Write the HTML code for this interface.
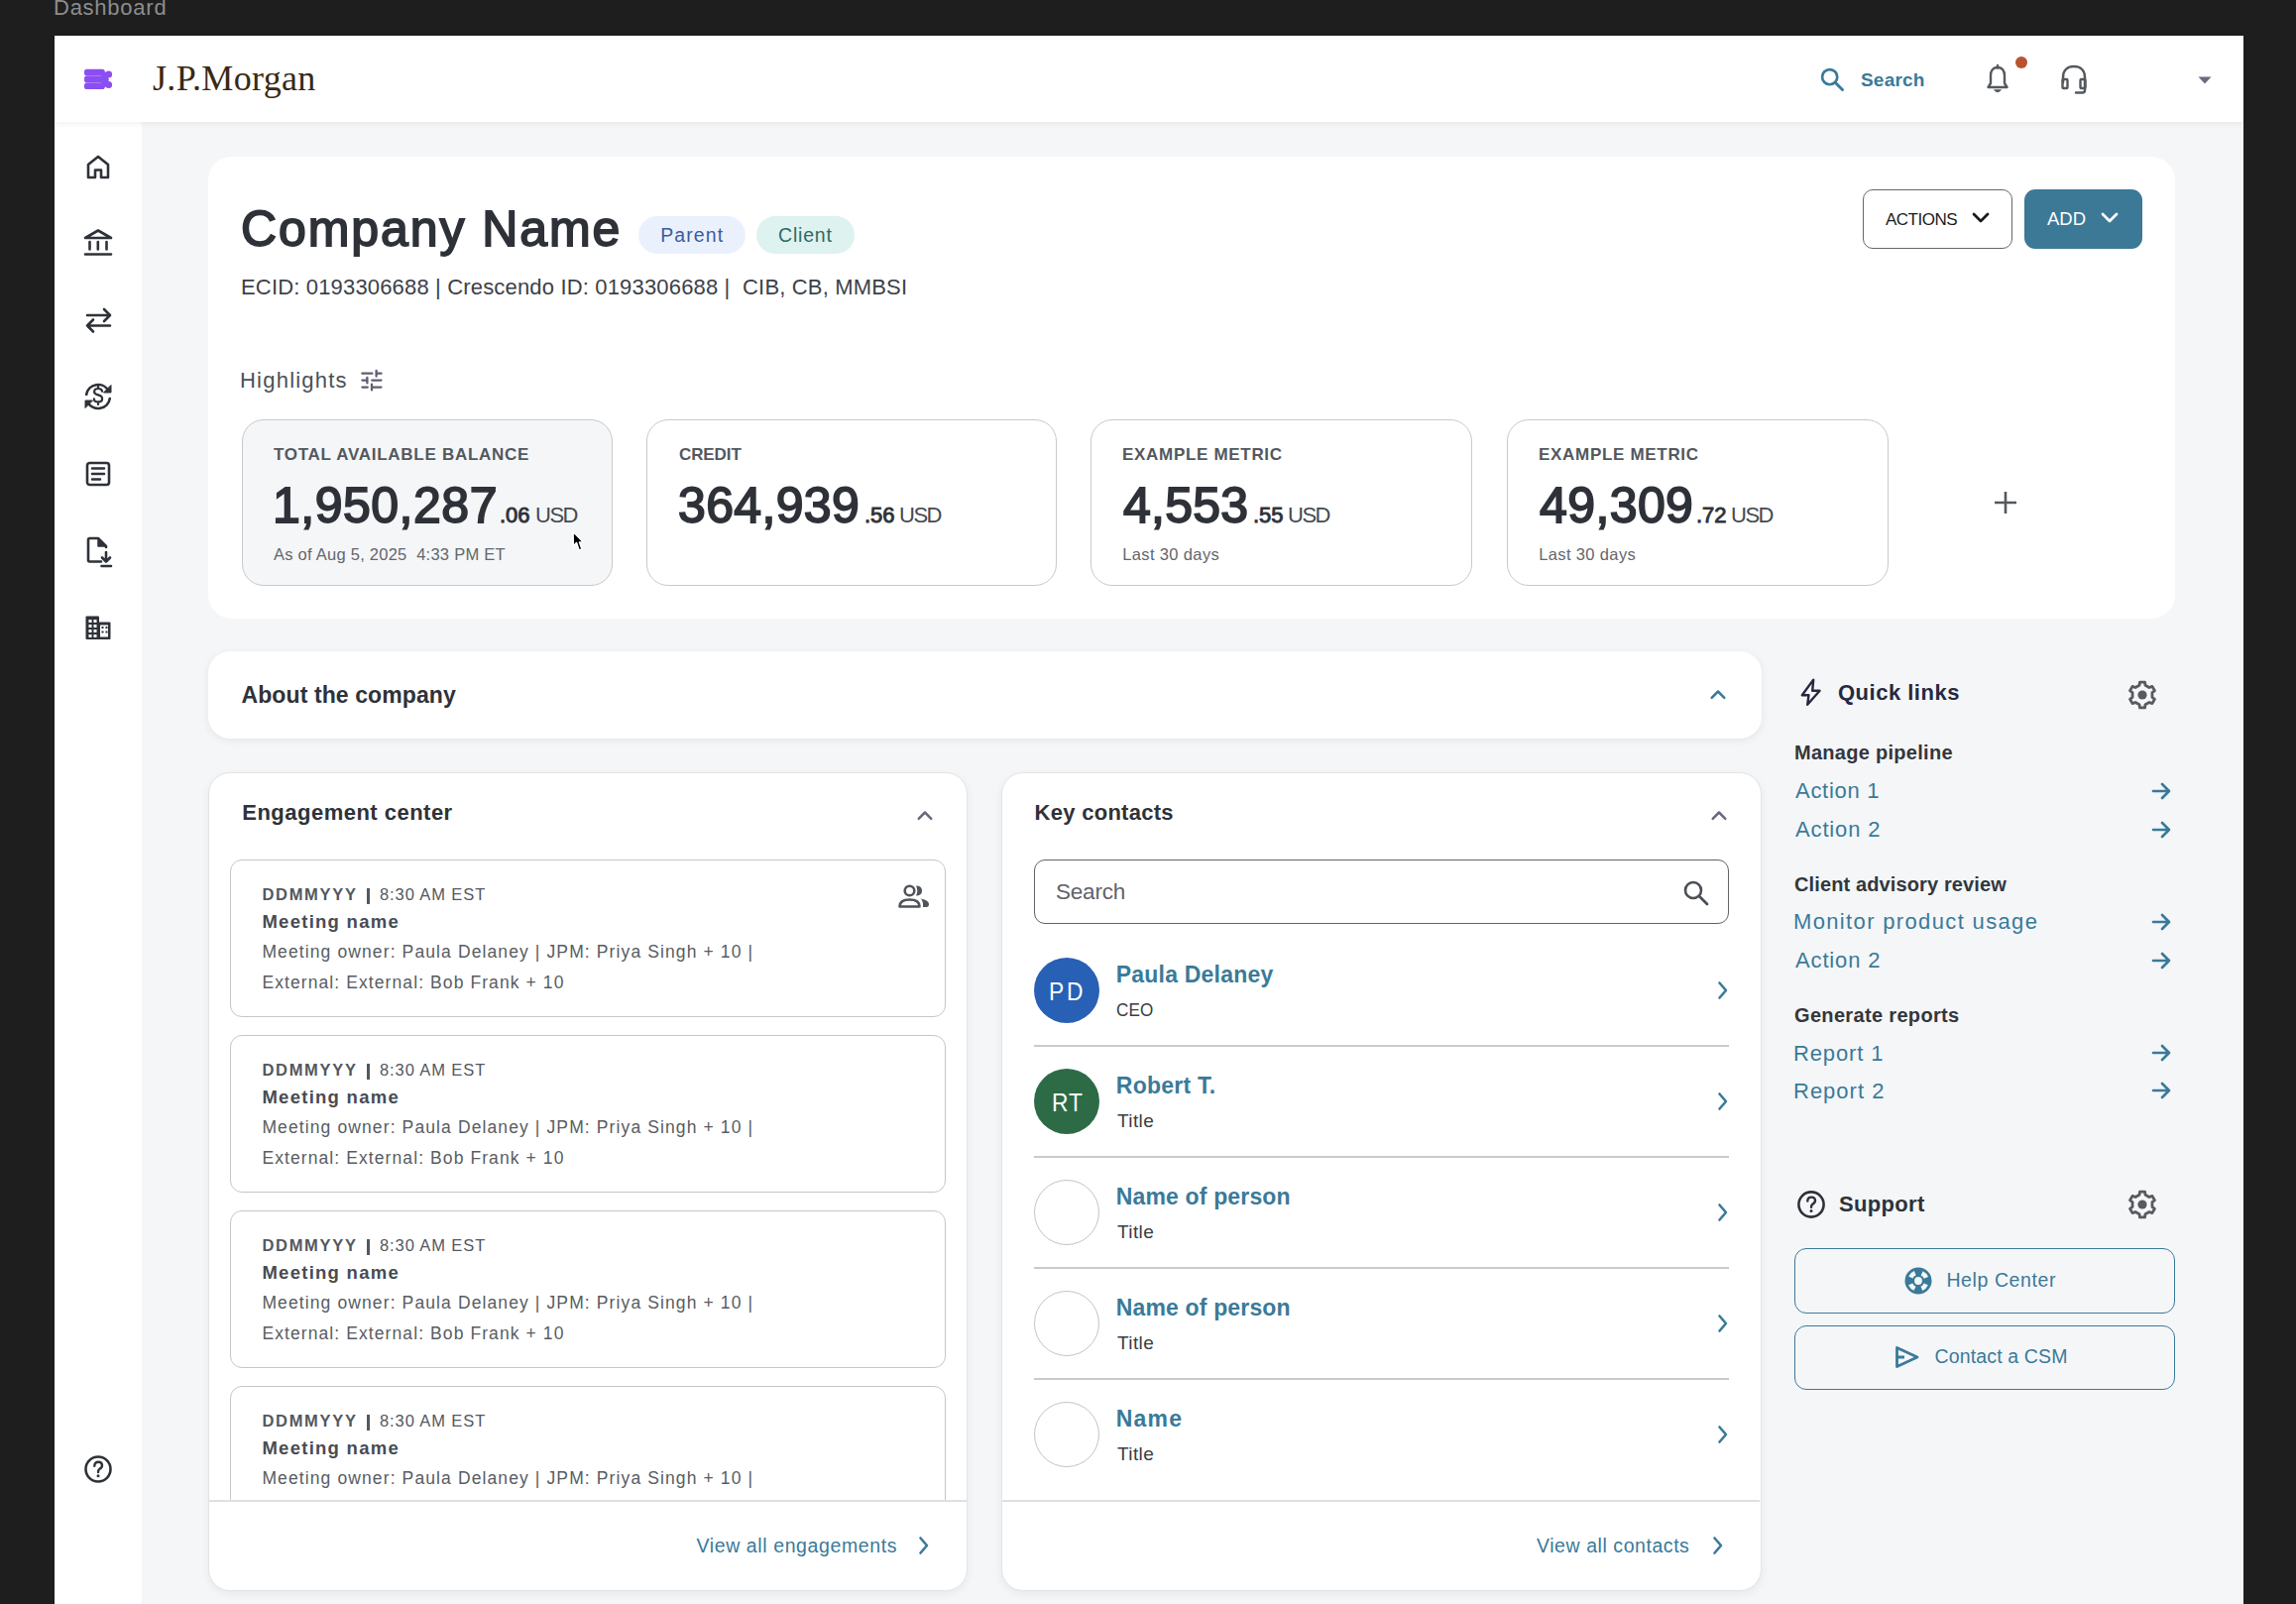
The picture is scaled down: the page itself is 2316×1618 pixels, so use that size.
<!DOCTYPE html><html><head><meta charset="utf-8"><style>
*{margin:0;padding:0;box-sizing:border-box}
html,body{width:2316px;height:1618px;overflow:hidden}
body{background:#1e1e1e;font-family:"Liberation Sans",sans-serif;position:relative}
.a{position:absolute}
.t{position:absolute;white-space:nowrap;line-height:1}
svg.a{overflow:visible}
</style></head><body>
<div class="t" id="tcf64cbfd" style="left:54.00px;top:-2.62px;font-size:22px;font-weight:400;color:#8d8d8d;letter-spacing:0.750px;">Dashboard</div>
<div class="a" style="left:55px;top:36px;width:2208px;height:1582px;background:#f5f6f8;"></div>
<div class="a" style="left:55px;top:36px;width:2208px;height:87px;background:#fff;box-shadow:0 2px 6px rgba(0,0,0,0.06);z-index:2;"></div>
<div class="a" style="left:55px;top:123px;width:88px;height:1495px;background:#fff;"></div>
<svg class="a" style="left:80px;top:64px;z-index:3;" width="40" height="32" viewBox="0 0 40 32" fill="none"><g fill="#8b4ef3"><rect x="5" y="5.8" width="20.8" height="6.6" rx="2.6"/><rect x="5" y="12.6" width="20" height="6.8" rx="2.6"/><rect x="5" y="19.6" width="20.8" height="6.4" rx="2.6"/><circle cx="29.6" cy="10.9" r="3.5"/><circle cx="29.6" cy="21.5" r="3.5"/><path d="M22 8 L28 9 L29.8 16.4 L28 23.5 L22 24 Z"/><rect x="22" y="11" width="5" height="10"/></g></svg>
<div class="t" id="t0781827a" style="left:154.00px;top:61.03px;font-size:36px;font-weight:400;color:#3a2914;letter-spacing:0.333px;font-family:'Liberation Serif',serif;z-index:3;">J.P.Morgan</div>
<svg class="a" style="left:1834px;top:66px;z-index:3;" width="28" height="28" viewBox="0 0 24 24" fill="none"><circle cx="10" cy="10" r="6.5" stroke="#3a7a99" stroke-width="2.3"/><path d="M15 15 L21 21" stroke="#3a7a99" stroke-width="2.5" stroke-linecap="round"/></svg>
<div class="t" id="t28336fed" style="left:1877.00px;top:70.72px;font-size:19px;font-weight:700;color:#3a7a99;letter-spacing:0.200px;z-index:3;">Search</div>
<svg class="a" style="left:2002px;top:64px;z-index:3;" width="26" height="32" viewBox="0 0 26 32" fill="none"><path d="M13 4 C8 4 6 8 6 12 V20 L3.5 24 H22.5 L20 20 V12 C20 8 18 4 13 4 Z" stroke="#55595e" stroke-width="2.4" stroke-linejoin="round"/><path d="M13 2 V4.5" stroke="#55595e" stroke-width="2.4" stroke-linecap="round"/><path d="M10.5 27 Q13 30 15.5 27 Z" fill="#55595e" stroke="#55595e" stroke-width="1.5"/></svg>
<div class="a" style="left:2033px;top:57px;width:12px;height:12px;border-radius:50%;background:#b9532f;z-index:3;"></div>
<svg class="a" style="left:2077px;top:64px;z-index:3;" width="30" height="32" viewBox="0 0 30 32" fill="none"><path d="M4 19 V14 C4 7 8.5 3 15 3 C21.5 3 26 7 26 14 V27 Q26 29.5 23.5 29.5 H17" stroke="#55595e" stroke-width="2.5" stroke-linecap="round"/><rect x="3.5" y="16" width="5" height="9" rx="1" stroke="#55595e" stroke-width="2.4"/><rect x="21.5" y="16" width="5" height="9" rx="1" stroke="#55595e" stroke-width="2.4"/></svg>
<svg class="a" style="left:2216px;top:76px;z-index:3;" width="16" height="10" viewBox="0 0 16 10" fill="none"><path d="M1.5 1.5 H14.5 L8 8.5 Z" fill="#6c6b7c"/></svg>
<svg class="a" style="left:86px;top:155px;" width="26" height="27" viewBox="0 0 26 27" fill="none"><path d="M3 11 L13 3 L23 11 V24 H16 V16.5 H10 V24 H3 Z" stroke="#2e3238" stroke-width="2.6" stroke-linejoin="round"/></svg>
<svg class="a" style="left:83px;top:229px;" width="32" height="30" viewBox="0 0 32 30" fill="none"><path d="M3 11 L16 3.5 L29 11 Z" stroke="#2e3238" stroke-width="2.6" stroke-linejoin="round"/><path d="M7.5 15 V22.5 M15.8 15 V22.5 M24.5 15 V22.5 M3 27.5 H29" stroke="#2e3238" stroke-width="2.6" stroke-linecap="round"/></svg>
<svg class="a" style="left:84px;top:163px;" width="30" height="20" viewBox="0 0 30 20" fill="none"></svg>
<svg class="a" style="left:84px;top:304px;" width="30" height="38" viewBox="0 0 30 38" fill="none"><path d="M4 14 H27 M21 8 L27 14 L21 20 M27 24.5 H4 M10 18.5 L4 24.5 L10 30.5" stroke="#2e3238" stroke-width="2.6" stroke-linecap="round" stroke-linejoin="round"/></svg>
<svg class="a" style="left:82px;top:383px;" width="34" height="34" viewBox="0 0 34 34" fill="none"><path d="M5.18 14.92 A12 12 0 0 1 27.39 11" stroke="#2e3238" stroke-width="2.6" stroke-linecap="round"/><path d="M28.82 19.08 A12 12 0 0 1 6.61 23" stroke="#2e3238" stroke-width="2.6" stroke-linecap="round"/><path d="M30 5.5 V13 H22.5 Z" fill="#2e3238" stroke="#2e3238" stroke-width="1" stroke-linejoin="round"/><path d="M4 28.5 V21 H11.5 Z" fill="#2e3238" stroke="#2e3238" stroke-width="1" stroke-linejoin="round"/><path d="M21 11.8 C21 9.8 19.3 9 17 9 C14.6 9 13.1 10.2 13.1 12.2 C13.1 14.3 15 14.9 17 15.4 C19.2 15.9 21.1 16.7 21.1 19.2 C21.1 21.3 19.4 22.4 17 22.4 C14.6 22.4 12.9 21.4 12.9 19.4 M17 6.5 V9 M17 22.4 V25" stroke="#2e3238" stroke-width="2.2" stroke-linecap="round"/></svg>
<svg class="a" style="left:85px;top:464px;" width="28" height="28" viewBox="0 0 28 28" fill="none"><rect x="3" y="3" width="22" height="22" rx="2.5" stroke="#2e3238" stroke-width="2.6"/><path d="M8 8.5 H20 M8 14 H20 M8 19.5 H16" stroke="#2e3238" stroke-width="2.6" stroke-linecap="round"/></svg>
<svg class="a" style="left:85px;top:539px;" width="30" height="35" viewBox="0 0 30 35" fill="none"><path d="M17 27.5 H5.5 Q4 27.5 4 26 V5.5 Q4 4 5.5 4 H14 L22 12 V13" stroke="#2e3238" stroke-width="2.6" stroke-linecap="round" stroke-linejoin="round"/><path d="M14 4 V12 H22 Z" fill="#2e3238" stroke="#2e3238" stroke-width="1.5" stroke-linejoin="round"/><path d="M22 18 V27 M18 23.5 L22 27.5 L26 23.5 M17.5 32 H27" stroke="#2e3238" stroke-width="2.6" stroke-linecap="round" stroke-linejoin="round"/></svg>
<svg class="a" style="left:84px;top:619px;" width="30" height="28" viewBox="0 0 30 28" fill="none"><path d="M2.5 25 V3.5 Q2.5 2.5 3.5 2.5 H15 Q16 2.5 16 3.5 V8.5 H26.5 Q27.5 8.5 27.5 9.5 V25 Q27.5 26 26.5 26 H3.5 Q2.5 26 2.5 25 Z" fill="#2e3238"/><g fill="#fff"><rect x="5.5" y="6" width="3" height="3"/><rect x="10.5" y="6" width="3" height="3"/><rect x="5.5" y="11" width="3" height="3"/><rect x="10.5" y="11" width="3" height="3"/><rect x="5.5" y="16" width="3" height="3"/><rect x="10.5" y="16" width="3" height="3"/><rect x="5.5" y="21" width="3" height="3"/><rect x="10.5" y="21" width="3" height="3"/><rect x="17" y="11.5" width="8" height="12"/></g><g fill="#2e3238"><rect x="18.5" y="13" width="2" height="2"/><rect x="22.5" y="13" width="2" height="2"/><rect x="18.5" y="17.5" width="2" height="2"/><rect x="22.5" y="17.5" width="2" height="2"/></g></svg>
<svg class="a" style="left:83px;top:1466px;" width="32" height="32" viewBox="0 0 32 32" fill="none"><circle cx="16" cy="16" r="12.5" stroke="#2e3238" stroke-width="2.6"/><path d="M12.3 12.8 Q12.3 8.8 16.2 8.8 Q20 8.8 20 12.3 Q20 14.5 17.5 15.8 Q16 16.7 16 19" stroke="#2e3238" stroke-width="2.4" stroke-linecap="round"/><circle cx="16" cy="22.8" r="1.5" fill="#2e3238"/></svg>
<div class="a" style="left:210px;top:158px;width:1984px;height:466px;background:#fff;border-radius:24px;"></div>
<div class="t" id="td104c888" style="left:243.00px;top:206.27px;font-size:50px;font-weight:400;color:#2e3238;letter-spacing:1.909px;-webkit-text-stroke:1.8px #2e3238;">Company Name</div>
<div class="a" style="left:644px;top:218px;width:108px;height:38px;background:#eaf1fc;border-radius:19px;"></div>
<div class="t" id="td9acc317" style="left:666.20px;top:227.69px;font-size:19.5px;font-weight:400;color:#3b5c9c;letter-spacing:1.100px;">Parent</div>
<div class="a" style="left:763px;top:218px;width:99px;height:38px;background:#def2f0;border-radius:19px;"></div>
<div class="t" id="t40ffaa43" style="left:785.00px;top:227.69px;font-size:19.5px;font-weight:400;color:#2c6a66;letter-spacing:0.800px;">Client</div>
<div class="t" id="t8c62459a" style="left:243.00px;top:279.38px;font-size:22px;font-weight:400;color:#3c4148;letter-spacing:0.167px;">ECID: 0193306688 | Crescendo ID: 0193306688 |&nbsp; CIB, CB, MMBSI</div>
<div class="t" id="tb2045c07" style="left:242.00px;top:373.48px;font-size:22px;font-weight:400;color:#4b5057;letter-spacing:1.222px;">Highlights</div>
<svg class="a" style="left:360px;top:368px;" width="32" height="32" viewBox="0 0 32 32" fill="none"><path d="M5.4 8.7 H15.4 M19.6 5.8 V11.6 M19.6 8.7 H24.5 M5.4 15.6 H10.4 M10.4 12.8 V18.4 M15.2 15.6 H24.5 M5.4 22.6 H10.8 M15 19.6 V25.4 M15 22.6 H24.5" stroke="#5f5e72" stroke-width="2.3" stroke-linecap="round"/></svg>
<div class="a" style="left:244px;top:423px;width:374px;height:168px;background:#f5f6f8;border:1.5px solid #c9c9c9;border-radius:22px;"></div>
<div class="a" style="left:652px;top:423px;width:414px;height:168px;background:#fff;border:1.5px solid #c9c9c9;border-radius:22px;"></div>
<div class="a" style="left:1100px;top:423px;width:385px;height:168px;background:#fff;border:1.5px solid #c9c9c9;border-radius:22px;"></div>
<div class="a" style="left:1520px;top:423px;width:385px;height:168px;background:#fff;border:1.5px solid #c9c9c9;border-radius:22px;"></div>
<div class="t" id="tda477504" style="left:276.00px;top:449.61px;font-size:17px;font-weight:700;color:#53585e;letter-spacing:0.727px;">TOTAL AVAILABLE BALANCE</div>
<div class="t" id="t1f604eae" style="left:685.00px;top:449.61px;font-size:17px;font-weight:700;color:#53585e;letter-spacing:-0.100px;">CREDIT</div>
<div class="t" id="t401ca53d" style="left:1132.00px;top:449.61px;font-size:17px;font-weight:700;color:#53585e;letter-spacing:0.692px;">EXAMPLE METRIC</div>
<div class="t" id="tab703c51" style="left:1552.00px;top:449.61px;font-size:17px;font-weight:700;color:#53585e;letter-spacing:0.692px;">EXAMPLE METRIC</div>
<div class="t" id="t136d3d16" style="left:275.00px;top:485.07px;font-size:50px;font-weight:400;color:#2e3238;letter-spacing:0.500px;-webkit-text-stroke:1.8px #2e3238;">1,950,287</div>
<div class="t" id="t26b25cbc" style="left:504.00px;top:508.58px;font-size:22px;font-weight:400;color:#2e3238;-webkit-text-stroke:0.9px #2e3238;">.06</div>
<div class="t" id="tcb8a6242" style="left:540.00px;top:508.58px;font-size:22px;font-weight:400;color:#444a50;letter-spacing:-1.500px;">USD</div>
<div class="t" id="tb9dac05a" style="left:684.00px;top:485.07px;font-size:50px;font-weight:400;color:#2e3238;letter-spacing:0.333px;-webkit-text-stroke:1.8px #2e3238;">364,939</div>
<div class="t" id="td2d37ace" style="left:872.00px;top:508.58px;font-size:22px;font-weight:400;color:#2e3238;-webkit-text-stroke:0.9px #2e3238;">.56</div>
<div class="t" id="t0d1d9da5" style="left:907.00px;top:508.58px;font-size:22px;font-weight:400;color:#444a50;letter-spacing:-1.500px;">USD</div>
<div class="t" id="t1cb333ec" style="left:1133.00px;top:485.07px;font-size:50px;font-weight:400;color:#2e3238;letter-spacing:0.250px;-webkit-text-stroke:1.8px #2e3238;">4,553</div>
<div class="t" id="tbbe65036" style="left:1264.00px;top:508.58px;font-size:22px;font-weight:400;color:#2e3238;-webkit-text-stroke:0.9px #2e3238;">.55</div>
<div class="t" id="tec8ee872" style="left:1299.00px;top:508.58px;font-size:22px;font-weight:400;color:#444a50;letter-spacing:-1.500px;">USD</div>
<div class="t" id="tfbbc8826" style="left:1553.00px;top:485.07px;font-size:50px;font-weight:400;color:#2e3238;letter-spacing:0.400px;-webkit-text-stroke:1.8px #2e3238;">49,309</div>
<div class="t" id="t36bd8de3" style="left:1711.00px;top:508.58px;font-size:22px;font-weight:400;color:#2e3238;-webkit-text-stroke:0.9px #2e3238;">.72</div>
<div class="t" id="t9194e0a6" style="left:1746.00px;top:508.58px;font-size:22px;font-weight:400;color:#444a50;letter-spacing:-1.500px;">USD</div>
<div class="t" id="t4a96b3c2" style="left:276.00px;top:550.53px;font-size:16.5px;font-weight:400;color:#63676c;letter-spacing:0.250px;">As of Aug 5, 2025&nbsp; 4:33 PM ET</div>
<div class="t" id="t311feab4" style="left:1132.20px;top:550.63px;font-size:16.5px;font-weight:400;color:#63676c;letter-spacing:0.364px;">Last 30 days</div>
<div class="t" id="tb1a34f10" style="left:1552.20px;top:550.63px;font-size:16.5px;font-weight:400;color:#63676c;letter-spacing:0.364px;">Last 30 days</div>
<svg class="a" style="left:2011px;top:495px;" width="24" height="24" viewBox="0 0 24 24" fill="none"><path d="M12 1 V23 M1 12 H23" stroke="#55595e" stroke-width="2.6"/></svg>
<div class="a" style="left:1879px;top:191px;width:151px;height:60px;background:#fff;border:1.5px solid #63686e;border-radius:10px;"></div>
<div class="t" id="tb54df40d" style="left:1902.00px;top:213.31px;font-size:17px;font-weight:400;color:#1b1b1b;letter-spacing:-0.500px;">ACTIONS</div>
<svg class="a" style="left:1988px;top:212px;" width="20" height="16" viewBox="0 0 20 16" fill="none"><path d="M3 4 L10 11 L17 4" stroke="#1b1b1b" stroke-width="2.8" stroke-linecap="round" stroke-linejoin="round"/></svg>
<div class="a" style="left:2042px;top:191px;width:119px;height:60px;background:#3c7996;border-radius:11px;"></div>
<div class="t" id="t7ec52ce2" style="left:2065.00px;top:212.04px;font-size:18.5px;font-weight:400;color:#fff;">ADD</div>
<svg class="a" style="left:2118px;top:212px;" width="20" height="16" viewBox="0 0 20 16" fill="none"><path d="M3 4 L10 11 L17 4" stroke="#fff" stroke-width="2.8" stroke-linecap="round" stroke-linejoin="round"/></svg>
<div class="a" style="left:210px;top:657px;width:1567px;height:88px;background:#fff;border-radius:22px;box-shadow:0 2px 8px rgba(0,0,0,0.07);"></div>
<div class="t" id="td41b3fd7" style="left:243.50px;top:689.73px;font-size:23px;font-weight:700;color:#2e3238;letter-spacing:0.100px;">About the company</div>
<svg class="a" style="left:1723px;top:693px;" width="20" height="14" viewBox="0 0 20 14" fill="none"><path d="M3.7 10.8 L10 4.5 L16.3 10.8" stroke="#3a7a99" stroke-width="2.5" stroke-linecap="round" stroke-linejoin="round"/></svg>
<div class="a" style="left:210px;top:779px;width:766px;height:826px;background:#fff;border:1px solid #e3e4e6;border-radius:22px;box-shadow:0 3px 8px rgba(0,0,0,0.06);"></div>
<div class="t" id="tb7bda999" style="left:244.30px;top:809.28px;font-size:22px;font-weight:700;color:#2e3238;letter-spacing:0.481px;">Engagement center</div>
<svg class="a" style="left:922.5px;top:815px;" width="20" height="14" viewBox="0 0 20 14" fill="none"><path d="M3.7 10.8 L10 4.5 L16.3 10.8" stroke="#6a697c" stroke-width="2.5" stroke-linecap="round" stroke-linejoin="round"/></svg>
<div class="a" style="left:211px;top:860px;width:764px;height:654px;overflow:hidden">
<div class="a" style="left:21px;top:7px;width:722px;height:159px;border:1.6px solid #c4c6c8;border-radius:12px;background:#fff"></div>
<div class="t" id="tf5c1f734" style="left:53.40px;top:34.03px;font-size:16.5px;font-weight:700;color:#53585e;letter-spacing:1.717px;">DDMMYYY</div>
<div class="a" style="left:159px;top:36px;width:2.6px;height:16px;background:#53585e"></div>
<div class="t" id="t66fb2616" style="left:172.00px;top:34.03px;font-size:16.5px;font-weight:400;color:#53585e;letter-spacing:0.900px;">8:30 AM EST</div>
<div class="t" id="t5f67d553" style="left:53.40px;top:61.34px;font-size:18.5px;font-weight:700;color:#474c52;letter-spacing:1.273px;">Meeting name</div>
<div class="t" id="t6567086d" style="left:53.40px;top:92.29px;font-size:17.5px;font-weight:400;color:#585d63;letter-spacing:1.113px;">Meeting owner: Paula Delaney | JPM: Priya Singh + 10 |</div>
<div class="t" id="t156a02c3" style="left:53.40px;top:122.79px;font-size:17.5px;font-weight:400;color:#585d63;letter-spacing:1.091px;">External: External: Bob Frank + 10</div>
<svg class="a" style="left:693px;top:30px;" width="36" height="28" viewBox="0 0 36 28" fill="none"><circle cx="13.5" cy="8.5" r="4.8" stroke="#4f5459" stroke-width="2.6"/><path d="M3.5 24.5 Q3.5 17.5 13.5 17.5 Q23.5 17.5 23.5 24.5 Z" stroke="#4f5459" stroke-width="2.6" stroke-linejoin="round"/><path d="M20 3.5 Q26 3.5 26 8.5 Q26 13.5 20 13.5 Q22.5 8.5 20 3.5 Z M25 16.5 Q33 18 33 22 Q33 25 30.5 25 H27 Q27.5 19.5 25 16.5 Z" fill="#4f5459"/></svg>
<div class="a" style="left:21px;top:184px;width:722px;height:159px;border:1.6px solid #c4c6c8;border-radius:12px;background:#fff"></div>
<div class="t" id="t8e1a8877" style="left:53.40px;top:211.03px;font-size:16.5px;font-weight:700;color:#53585e;letter-spacing:1.717px;">DDMMYYY</div>
<div class="a" style="left:159px;top:213px;width:2.6px;height:16px;background:#53585e"></div>
<div class="t" id="t9d9e7705" style="left:172.00px;top:211.03px;font-size:16.5px;font-weight:400;color:#53585e;letter-spacing:0.900px;">8:30 AM EST</div>
<div class="t" id="ta179fa35" style="left:53.40px;top:238.34px;font-size:18.5px;font-weight:700;color:#474c52;letter-spacing:1.273px;">Meeting name</div>
<div class="t" id="t99d16fb4" style="left:53.40px;top:269.29px;font-size:17.5px;font-weight:400;color:#585d63;letter-spacing:1.113px;">Meeting owner: Paula Delaney | JPM: Priya Singh + 10 |</div>
<div class="t" id="tf53fd978" style="left:53.40px;top:299.79px;font-size:17.5px;font-weight:400;color:#585d63;letter-spacing:1.091px;">External: External: Bob Frank + 10</div>
<div class="a" style="left:21px;top:361px;width:722px;height:159px;border:1.6px solid #c4c6c8;border-radius:12px;background:#fff"></div>
<div class="t" id="t698c9b4c" style="left:53.40px;top:388.03px;font-size:16.5px;font-weight:700;color:#53585e;letter-spacing:1.717px;">DDMMYYY</div>
<div class="a" style="left:159px;top:390px;width:2.6px;height:16px;background:#53585e"></div>
<div class="t" id="te75729a3" style="left:172.00px;top:388.03px;font-size:16.5px;font-weight:400;color:#53585e;letter-spacing:0.900px;">8:30 AM EST</div>
<div class="t" id="t002e0d3e" style="left:53.40px;top:415.34px;font-size:18.5px;font-weight:700;color:#474c52;letter-spacing:1.273px;">Meeting name</div>
<div class="t" id="t2fc9b265" style="left:53.40px;top:446.29px;font-size:17.5px;font-weight:400;color:#585d63;letter-spacing:1.113px;">Meeting owner: Paula Delaney | JPM: Priya Singh + 10 |</div>
<div class="t" id="t95e243bb" style="left:53.40px;top:476.79px;font-size:17.5px;font-weight:400;color:#585d63;letter-spacing:1.091px;">External: External: Bob Frank + 10</div>
<div class="a" style="left:21px;top:538px;width:722px;height:159px;border:1.6px solid #c4c6c8;border-radius:12px;background:#fff"></div>
<div class="t" id="t06ed2377" style="left:53.40px;top:565.03px;font-size:16.5px;font-weight:700;color:#53585e;letter-spacing:1.717px;">DDMMYYY</div>
<div class="a" style="left:159px;top:567px;width:2.6px;height:16px;background:#53585e"></div>
<div class="t" id="t4fc9864a" style="left:172.00px;top:565.03px;font-size:16.5px;font-weight:400;color:#53585e;letter-spacing:0.900px;">8:30 AM EST</div>
<div class="t" id="t7c10bd91" style="left:53.40px;top:592.34px;font-size:18.5px;font-weight:700;color:#474c52;letter-spacing:1.273px;">Meeting name</div>
<div class="t" id="t278320a0" style="left:53.40px;top:623.29px;font-size:17.5px;font-weight:400;color:#585d63;letter-spacing:1.113px;">Meeting owner: Paula Delaney | JPM: Priya Singh + 10 |</div>
<div class="t" id="t6b31bb20" style="left:54.70px;top:653.79px;font-size:17.5px;font-weight:400;color:#585d63;">External: External: Bob Frank + 10</div>
</div>
<div class="a" style="left:211px;top:1513px;width:764px;height:1.5px;background:#dfe0e2;"></div>
<div class="t" id="t16e241b8" style="left:702.50px;top:1549.99px;font-size:19.5px;font-weight:400;color:#3a7a99;letter-spacing:0.605px;">View all engagements</div>
<svg class="a" style="left:924.5px;top:1549px;" width="14" height="20" viewBox="0 0 14 20" fill="none"><path d="M3.5 2.5 L10 10 L3.5 17.5" stroke="#3a7a99" stroke-width="2.6" stroke-linecap="round" stroke-linejoin="round"/></svg>
<div class="a" style="left:1010px;top:779px;width:767px;height:826px;background:#fff;border:1px solid #e3e4e6;border-radius:22px;box-shadow:0 3px 8px rgba(0,0,0,0.06);"></div>
<div class="t" id="t18769376" style="left:1043.60px;top:809.48px;font-size:22px;font-weight:700;color:#2e3238;letter-spacing:0.273px;">Key contacts</div>
<svg class="a" style="left:1723.5px;top:815px;" width="20" height="14" viewBox="0 0 20 14" fill="none"><path d="M3.7 10.8 L10 4.5 L16.3 10.8" stroke="#6a697c" stroke-width="2.5" stroke-linecap="round" stroke-linejoin="round"/></svg>
<div class="a" style="left:1043px;top:867px;width:701px;height:65px;background:#fff;border:1.5px solid #5f646a;border-radius:11px;"></div>
<div class="t" id="tfd39c783" style="left:1065.00px;top:888.75px;font-size:22.5px;font-weight:400;color:#5f6368;letter-spacing:-0.200px;">Search</div>
<svg class="a" style="left:1695px;top:885px;" width="32" height="32" viewBox="0 0 32 32" fill="none"><circle cx="13" cy="13" r="8" stroke="#4a4f55" stroke-width="2.6"/><path d="M19 19 L27 27" stroke="#4a4f55" stroke-width="2.8" stroke-linecap="round"/></svg>
<div class="a" style="left:1043px;top:966px;width:66px;height:66px;background:#2760b5;border-radius:50%;"></div>
<div class="t" id="tb1181ec8" style="left:1058.20px;top:987.37px;font-size:26.5px;font-weight:400;color:#fff;letter-spacing:3.200px;transform:scaleX(0.86);transform-origin:0 0;">PD</div>
<div class="t" id="t5dbe351c" style="left:1125.80px;top:971.73px;font-size:23px;font-weight:700;color:#3a7a99;letter-spacing:0.208px;">Paula Delaney</div>
<div class="t" id="te776423a" style="left:1126.00px;top:1009.12px;font-size:19px;font-weight:400;color:#3a3d42;letter-spacing:0.100px;transform:scaleX(0.9);transform-origin:0 0;">CEO</div>
<svg class="a" style="left:1731px;top:989px;" width="14" height="20" viewBox="0 0 14 20" fill="none"><path d="M3.5 2.5 L10 10 L3.5 17.5" stroke="#3a7a99" stroke-width="2.6" stroke-linecap="round" stroke-linejoin="round"/></svg>
<div class="a" style="left:1043px;top:1054px;width:701px;height:1.5px;background:#c9cacc;"></div>
<div class="a" style="left:1043px;top:1078px;width:66px;height:66px;background:#2d6b46;border-radius:50%;"></div>
<div class="t" id="t0d149b3d" style="left:1061.00px;top:1099.37px;font-size:26.5px;font-weight:400;color:#fff;letter-spacing:1.200px;transform:scaleX(0.86);transform-origin:0 0;">RT</div>
<div class="t" id="t220af7c3" style="left:1125.80px;top:1083.73px;font-size:23px;font-weight:700;color:#3a7a99;letter-spacing:0.250px;">Robert T.</div>
<div class="t" id="t0d84b6ca" style="left:1127.00px;top:1121.12px;font-size:19px;font-weight:400;color:#3a3d42;letter-spacing:0.400px;">Title</div>
<svg class="a" style="left:1731px;top:1101px;" width="14" height="20" viewBox="0 0 14 20" fill="none"><path d="M3.5 2.5 L10 10 L3.5 17.5" stroke="#3a7a99" stroke-width="2.6" stroke-linecap="round" stroke-linejoin="round"/></svg>
<div class="a" style="left:1043px;top:1166px;width:701px;height:1.5px;background:#c9cacc;"></div>
<div class="a" style="left:1043px;top:1190px;width:66px;height:66px;background:#fff;border:1.5px solid #c3c4c6;border-radius:50%;"></div>
<div class="t" id="t7a3ae72c" style="left:1125.80px;top:1195.73px;font-size:23px;font-weight:700;color:#3a7a99;letter-spacing:0.154px;">Name of person</div>
<div class="t" id="t789c720f" style="left:1127.00px;top:1233.12px;font-size:19px;font-weight:400;color:#3a3d42;letter-spacing:0.400px;">Title</div>
<svg class="a" style="left:1731px;top:1213px;" width="14" height="20" viewBox="0 0 14 20" fill="none"><path d="M3.5 2.5 L10 10 L3.5 17.5" stroke="#3a7a99" stroke-width="2.6" stroke-linecap="round" stroke-linejoin="round"/></svg>
<div class="a" style="left:1043px;top:1278px;width:701px;height:1.5px;background:#c9cacc;"></div>
<div class="a" style="left:1043px;top:1302px;width:66px;height:66px;background:#fff;border:1.5px solid #c3c4c6;border-radius:50%;"></div>
<div class="t" id="t703077d0" style="left:1125.80px;top:1307.73px;font-size:23px;font-weight:700;color:#3a7a99;letter-spacing:0.154px;">Name of person</div>
<div class="t" id="t8f047b12" style="left:1127.00px;top:1345.12px;font-size:19px;font-weight:400;color:#3a3d42;letter-spacing:0.400px;">Title</div>
<svg class="a" style="left:1731px;top:1325px;" width="14" height="20" viewBox="0 0 14 20" fill="none"><path d="M3.5 2.5 L10 10 L3.5 17.5" stroke="#3a7a99" stroke-width="2.6" stroke-linecap="round" stroke-linejoin="round"/></svg>
<div class="a" style="left:1043px;top:1390px;width:701px;height:1.5px;background:#c9cacc;"></div>
<div class="a" style="left:1043px;top:1414px;width:66px;height:66px;background:#fff;border:1.5px solid #c3c4c6;border-radius:50%;"></div>
<div class="t" id="t4ae96383" style="left:1125.80px;top:1419.73px;font-size:23px;font-weight:700;color:#3a7a99;letter-spacing:1.167px;">Name</div>
<div class="t" id="tf8235aa6" style="left:1127.00px;top:1457.12px;font-size:19px;font-weight:400;color:#3a3d42;letter-spacing:0.400px;">Title</div>
<svg class="a" style="left:1731px;top:1437px;" width="14" height="20" viewBox="0 0 14 20" fill="none"><path d="M3.5 2.5 L10 10 L3.5 17.5" stroke="#3a7a99" stroke-width="2.6" stroke-linecap="round" stroke-linejoin="round"/></svg>
<div class="a" style="left:1011px;top:1513px;width:764px;height:1.5px;background:#dfe0e2;"></div>
<div class="t" id="t2e661a94" style="left:1550.00px;top:1549.99px;font-size:19.5px;font-weight:400;color:#3a7a99;letter-spacing:0.562px;">View all contacts</div>
<svg class="a" style="left:1726px;top:1549px;" width="14" height="20" viewBox="0 0 14 20" fill="none"><path d="M3.5 2.5 L10 10 L3.5 17.5" stroke="#3a7a99" stroke-width="2.6" stroke-linecap="round" stroke-linejoin="round"/></svg>
<svg class="a" style="left:1805px;top:675px;" width="40" height="40" viewBox="0 0 40 40" fill="none"><path d="M24.2 10.6 L12.8 26.2 H19.5 L18.2 35.8 L30.6 21.8 H23.2 Z" stroke="#272840" stroke-width="2.4" stroke-linejoin="round"/></svg>
<div class="t" id="t9c586317" style="left:1854.00px;top:687.88px;font-size:22px;font-weight:700;color:#272840;letter-spacing:0.500px;">Quick links</div>
<svg class="a" style="left:2144.7px;top:685px;" width="32" height="32" viewBox="0 0 32 32" fill="none"><path d="M13.02 6.25 L13.48 3.04 L18.52 3.04 L18.98 6.25 L22.96 8.54 L25.96 7.34 L28.48 11.70 L25.94 13.71 L25.94 18.29 L28.48 20.30 L25.96 24.66 L22.96 23.46 L18.98 25.75 L18.52 28.96 L13.48 28.96 L13.02 25.75 L9.04 23.46 L6.04 24.66 L3.52 20.30 L6.06 18.29 L6.06 13.71 L3.52 11.70 L6.04 7.34 L9.04 8.54 Z" stroke="#575b60" stroke-width="2.8" stroke-linejoin="round"/><circle cx="16" cy="16" r="4.6" fill="#575b60"/></svg>
<div class="t" id="td539e993" style="left:1810.00px;top:749.07px;font-size:20px;font-weight:700;color:#33373d;letter-spacing:0.286px;">Manage pipeline</div>
<div class="t" id="t6f2c8c78" style="left:1811.00px;top:787.38px;font-size:22px;font-weight:400;color:#3a7a99;letter-spacing:0.714px;">Action 1</div>
<svg class="a" style="left:2168px;top:787.6px;" width="24" height="20" viewBox="0 0 24 20" fill="none"><path d="M4 10 H20 M13 3 L20 10 L13 17" stroke="#3a7a99" stroke-width="2.7" stroke-linecap="round" stroke-linejoin="round"/></svg>
<div class="t" id="tc4576426" style="left:1811.00px;top:826.38px;font-size:22px;font-weight:400;color:#3a7a99;letter-spacing:0.857px;">Action 2</div>
<svg class="a" style="left:2168px;top:826.6px;" width="24" height="20" viewBox="0 0 24 20" fill="none"><path d="M4 10 H20 M13 3 L20 10 L13 17" stroke="#3a7a99" stroke-width="2.7" stroke-linecap="round" stroke-linejoin="round"/></svg>
<div class="t" id="t48ad21b4" style="left:1810.00px;top:881.67px;font-size:20px;font-weight:700;color:#33373d;letter-spacing:0.124px;">Client advisory review</div>
<div class="t" id="t8ea6ed6a" style="left:1809.00px;top:919.38px;font-size:22px;font-weight:400;color:#3a7a99;letter-spacing:1.350px;">Monitor product usage</div>
<svg class="a" style="left:2168px;top:919.6px;" width="24" height="20" viewBox="0 0 24 20" fill="none"><path d="M4 10 H20 M13 3 L20 10 L13 17" stroke="#3a7a99" stroke-width="2.7" stroke-linecap="round" stroke-linejoin="round"/></svg>
<div class="t" id="t316c18f0" style="left:1811.00px;top:958.38px;font-size:22px;font-weight:400;color:#3a7a99;letter-spacing:0.857px;">Action 2</div>
<svg class="a" style="left:2168px;top:958.6px;" width="24" height="20" viewBox="0 0 24 20" fill="none"><path d="M4 10 H20 M13 3 L20 10 L13 17" stroke="#3a7a99" stroke-width="2.7" stroke-linecap="round" stroke-linejoin="round"/></svg>
<div class="t" id="teecdf24f" style="left:1810.00px;top:1014.07px;font-size:20px;font-weight:700;color:#33373d;letter-spacing:0.333px;">Generate reports</div>
<div class="t" id="t81068e1f" style="left:1809.00px;top:1052.08px;font-size:22px;font-weight:400;color:#3a7a99;letter-spacing:0.857px;">Report 1</div>
<svg class="a" style="left:2168px;top:1052.3px;" width="24" height="20" viewBox="0 0 24 20" fill="none"><path d="M4 10 H20 M13 3 L20 10 L13 17" stroke="#3a7a99" stroke-width="2.7" stroke-linecap="round" stroke-linejoin="round"/></svg>
<div class="t" id="t9a9e92c8" style="left:1809.00px;top:1090.18px;font-size:22px;font-weight:400;color:#3a7a99;letter-spacing:1.000px;">Report 2</div>
<svg class="a" style="left:2168px;top:1090.4px;" width="24" height="20" viewBox="0 0 24 20" fill="none"><path d="M4 10 H20 M13 3 L20 10 L13 17" stroke="#3a7a99" stroke-width="2.7" stroke-linecap="round" stroke-linejoin="round"/></svg>
<svg class="a" style="left:1810px;top:1198px;" width="34" height="34" viewBox="0 0 34 34" fill="none"><circle cx="17" cy="17" r="12.6" stroke="#2e3238" stroke-width="2.6"/><path d="M13.3 13.6 Q13.3 9.6 17.2 9.6 Q21 9.6 21 13.1 Q21 15.3 18.5 16.6 Q17 17.5 17 19.8" stroke="#2e3238" stroke-width="2.4" stroke-linecap="round"/><circle cx="17" cy="23.6" r="1.5" fill="#2e3238"/></svg>
<div class="t" id="t10f3c465" style="left:1855.00px;top:1204.38px;font-size:22px;font-weight:700;color:#2e3238;letter-spacing:0.333px;">Support</div>
<svg class="a" style="left:2144.8px;top:1199px;" width="32" height="32" viewBox="0 0 32 32" fill="none"><path d="M13.02 6.25 L13.48 3.04 L18.52 3.04 L18.98 6.25 L22.96 8.54 L25.96 7.34 L28.48 11.70 L25.94 13.71 L25.94 18.29 L28.48 20.30 L25.96 24.66 L22.96 23.46 L18.98 25.75 L18.52 28.96 L13.48 28.96 L13.02 25.75 L9.04 23.46 L6.04 24.66 L3.52 20.30 L6.06 18.29 L6.06 13.71 L3.52 11.70 L6.04 7.34 L9.04 8.54 Z" stroke="#575b60" stroke-width="2.8" stroke-linejoin="round"/><circle cx="16" cy="16" r="4.6" fill="#575b60"/></svg>
<div class="a" style="left:1810px;top:1259px;width:384px;height:66px;border:1.5px solid #3a7a99;border-radius:12px;"></div>
<svg class="a" style="left:1920px;top:1277px;" width="30" height="30" viewBox="0 0 30 30" fill="none"><circle cx="15" cy="15" r="13.5" fill="#3a7a99"/><circle cx="15" cy="15" r="3.9" fill="#f5f6f8"/><circle cx="15" cy="15" r="8.5" stroke="#f5f6f8" stroke-width="4.6" stroke-dasharray="6.3 7.05" stroke-dashoffset="-3.5"/></svg>
<div class="t" id="td0436df4" style="left:1963.40px;top:1282.19px;font-size:19.5px;font-weight:400;color:#3a7a99;letter-spacing:0.600px;">Help Center</div>
<div class="a" style="left:1810px;top:1337px;width:384px;height:65px;border:1.5px solid #3a7a99;border-radius:12px;"></div>
<svg class="a" style="left:1908px;top:1356px;" width="30" height="26" viewBox="0 0 30 26" fill="none"><path d="M5.5 3.5 L26 13 L5.5 22.5 Z M5.5 13 H13" stroke="#3a7a99" stroke-width="2.8" stroke-linejoin="round"/></svg>
<div class="t" id="tfb8a98eb" style="left:1951.60px;top:1359.29px;font-size:19.5px;font-weight:400;color:#3a7a99;letter-spacing:0.133px;">Contact a CSM</div>
<svg class="a" style="left:574px;top:532px;z-index:5;" width="20" height="28" viewBox="0 0 20 28" fill="none"><path d="M4 4.2 L4.3 19 L7.5 15.5 L10 23 L13 22 L10.5 15 L14.5 15 Z" fill="#000" stroke="#fff" stroke-width="1.6" stroke-linejoin="round"/></svg>
</body></html>
